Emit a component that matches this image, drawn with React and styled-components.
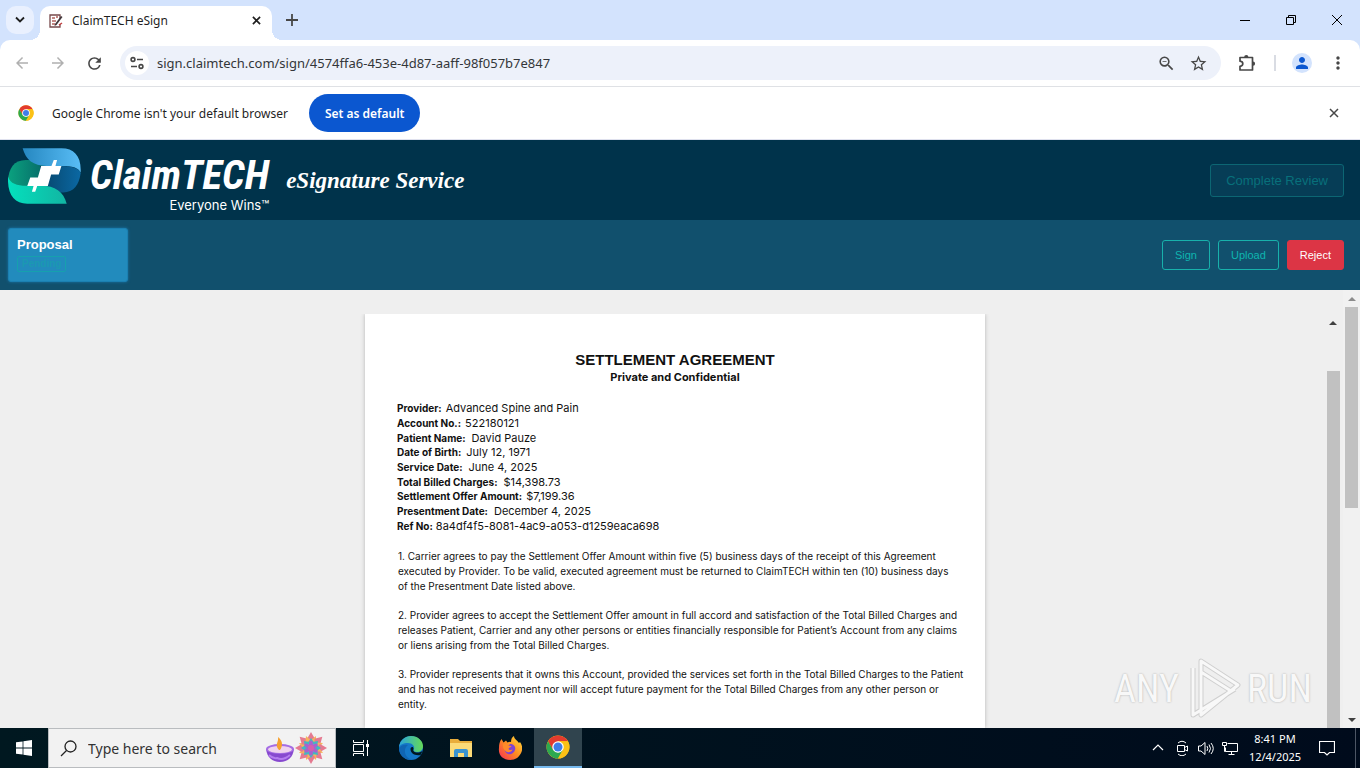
import React from 'react';
import styled, { createGlobalStyle } from 'styled-components';
import { MdArrowBack, MdArrowForward, MdRefresh, MdStarOutline, MdZoomOut, MdPerson, MdMoreVert } from 'react-icons/md';

const GlobalStyle = createGlobalStyle`
    * {
        box-sizing: border-box;
    }
    body {
        margin: 0;
        font-family: 'Liberation Sans', Arial, sans-serif;
    }
    button, input {
        font-family: inherit;
        margin: 0;
    }
    svg {
        display: block;
        flex: none;
    }
`;

const uiFont = `'Noto Sans', 'Open Sans', sans-serif`;

const Screen = styled.div`
    display: flex;
    flex-direction: column;
    height: 100vh;
    overflow: hidden;
    background: #efefef;
`;

/* browser chrome */

const TabStrip = styled.div`
    display: flex;
    align-items: flex-end;
    height: 40px;
    padding-left: 6px;
    background: #d3e3fd;
    font-family: ${uiFont};
`;

const PlainButton = styled.button`
    display: flex;
    align-items: center;
    justify-content: center;
    flex: none;
    width: ${props => props.$w || 32}px;
    height: ${props => props.$h || 32}px;
    padding: 0;
    border: none;
    border-radius: ${props => props.$radius || 0};
    background: ${props => props.$bg || 'transparent'};
    color: ${props => props.$color || '#474747'};
`;

const TabSearch = styled(PlainButton)`
    align-self: center;
    margin-right: 6px;
`;

const Tab = styled.div`
    position: relative;
    display: flex;
    align-items: center;
    width: 232px;
    height: 34px;
    padding: 0 8px 5px;
    border-radius: 10px 10px 0 0;
    background: #fff;
    font-size: 12px;
    color: #1f1f1f;

    &::before,
    &::after {
        content: '';
        position: absolute;
        bottom: 0;
        width: 10px;
        height: 10px;
    }
    &::before {
        right: 100%;
        background: radial-gradient(circle at 0 0, transparent 10px, #fff 10px);
    }
    &::after {
        left: 100%;
        background: radial-gradient(circle at 100% 0, transparent 10px, #fff 10px);
    }
`;

const TabTitle = styled.span`
    flex: 1;
    margin-left: 8px;
`;

const WindowButtons = styled.div`
    display: flex;
    align-self: flex-start;
    margin-left: auto;
`;

const ToolbarBack = styled.div`
    background: #d3e3fd;
`;

const Toolbar = styled.div`
    display: flex;
    align-items: center;
    height: 47px;
    padding: 0 2px 0 6px;
    border-bottom: 1px solid #dfe1e5;
    border-radius: 10px 10px 0 0;
    background: #fff;
    font-family: ${uiFont};
`;

const NavButtons = styled.div`
    display: flex;
    gap: 4px;
    margin-right: 10px;
`;

const AddressBar = styled.div`
    display: flex;
    align-items: center;
    flex: 1;
    height: 34px;
    padding: 0 7px 0 5px;
    border-radius: 17px;
    background: #edf1fa;
`;

const UrlInput = styled.input`
    flex: 1;
    margin-left: 8px;
    padding: 0;
    border: none;
    outline: none;
    background: transparent;
    font-size: 13px;
    color: #333639;
`;

const ToolbarDivider = styled.span`
    width: 2px;
    height: 16px;
    margin: 0 10px 0 1px;
    background: #d9dce3;
`;

const InfoBar = styled.div`
    display: flex;
    align-items: center;
    height: 53px;
    padding: 0 10px 0 18px;
    border-bottom: 1px solid #dfe1ee;
    background: #fff;
    font-family: ${uiFont};
    font-size: 12px;
    color: #1f1f1f;
`;

const InfoText = styled.span`
    flex: none;
    margin: 0 21px 0 18px;
`;

const DefaultButton = styled.button`
    height: 38px;
    padding: 0 16px;
    border: none;
    border-radius: 19px;
    background: #0b57d0;
    font-size: 12px;
    font-weight: 600;
    color: #fff;
    margin-right: auto;
`;

/* page header */

const Header = styled.header`
    display: flex;
    align-items: center;
    justify-content: space-between;
    height: 80px;
    padding: 0 16px 0 8px;
    background: #00334b;
`;

const Brand = styled.a`
    display: flex;
    align-items: center;
    gap: 9px;
    color: #fff;
    text-decoration: none;
`;

const BrandMark = styled.svg`
    align-self: flex-start;
`;

const Wordmark = styled.span`
    display: flex;
    flex-direction: column;
    align-items: flex-end;
    padding-top: 4px;
`;

const BrandName = styled.span`
    font-family: 'Roboto Condensed', 'Open Sans Condensed', Roboto, sans-serif;
    font-size: 41px;
    font-weight: bold;
    font-style: italic;
    line-height: 46px;
`;

const Tagline = styled.span`
    font-family: Inter, sans-serif;
    font-size: 13px;
    line-height: 14px;
`;

const ServiceName = styled.span`
    margin-left: 8px;
    padding-top: 2px;
    font-family: 'Brush Script MT', 'Liberation Serif', cursive;
    font-size: 23px;
    font-style: italic;
    font-weight: bold;
`;

const ActionButton = styled.button`
    height: ${props => props.$large ? 33 : 30}px;
    padding: 0 ${props => props.$large ? 15 : 12}px;
    border: 1px solid ${props => props.$danger ? '#dc3545' : '#18b1ab'};
    border-radius: 3px;
    background: ${props => props.$danger ? '#dc3545' : 'transparent'};
    font-size: ${props => props.$large ? 13 : 11}px;
    color: ${props => props.$danger ? '#fff' : '#0fb5b0'};

    &:disabled {
        border-color: #0c6673;
        background: #063d56;
        color: #08707b;
    }
`;

const DocumentBar = styled.nav`
    display: flex;
    align-items: center;
    justify-content: space-between;
    height: 70px;
    padding: 0 16px 0 8px;
    background: #11506d;
`;

const DocumentTab = styled.button`
    display: flex;
    flex-direction: column;
    align-items: flex-start;
    width: 120px;
    height: 54px;
    padding: 8px;
    border: 1px solid #1b80b2;
    border-radius: 3px;
    background: #228bbd;
    box-shadow: 0 0 3px #1a78ab;
    color: #fff;
    font-size: 13px;
    font-weight: bold;
    line-height: 16px;
`;

const StatusBadge = styled.span`
    margin-top: 3px;
    padding: 0 4px;
    border: 1px solid #16a0ae;
    border-radius: 2px;
    font-size: 10px;
    line-height: 14px;
    color: #1b99b2;
`;

const Actions = styled.div`
    display: flex;
    gap: 8px;
`;

/* document viewer */

const Workspace = styled.main`
    position: relative;
    display: flex;
    flex: 1;
    min-height: 0;
`;

const Viewer = styled.section`
    display: flex;
    flex: 1;
    padding: 24px 2px 0 25px;
    overflow: hidden;
`;

const PageArea = styled.div`
    display: flex;
    justify-content: center;
    flex: 1;
`;

const Page = styled.article`
    width: 620px;
    padding: 37px 32px 0;
    background: #fff;
    box-shadow: 0 0 4px #b5b5b5;
    color: #111;
    clip-path: inset(0 -6px);
    font-family: Inter, 'Liberation Sans', sans-serif;
`;

const PageTitle = styled.h1`
    margin: 0;
    font-family: 'Liberation Sans', sans-serif;
    font-size: 15px;
    line-height: 18px;
    text-align: center;
`;

const PageSubtitle = styled.h2`
    margin: 0 0 16px;
    font-size: 11px;
    line-height: 16px;
    text-align: center;
`;

const Terms = styled.dl`
    display: flex;
    flex-direction: column;
    height: 132px;
    margin: 0 0 16px;
`;

const Term = styled.div`
    display: flex;
    flex: 1;
    align-items: center;
    gap: ${props => props.$gap || 4}px;

    dt {
        font-size: 10px;
        font-weight: bold;
    }
    dd {
        margin: 0;
        font-size: 11px;
    }
`;

const Clause = styled.p`
    margin: 0 0 14px 1px;
    font-size: 10px;
    line-height: 15px;
    white-space: nowrap;
`;

const ScrollTrack = styled.div`
    display: flex;
    flex-direction: column;
    align-items: center;
    flex: none;
    width: ${props => props.$outer ? 17 : 16}px;
    background: ${props => props.$outer ? '#f1f1f1' : 'transparent'};
`;

const ScrollArrow = styled.span`
    width: 17px;
    height: 17px;
    display: flex;
    align-items: center;
    justify-content: center;
    color: ${props => props.$dim ? '#8b8b8b' : '#404040'};
`;

const ScrollThumb = styled.span`
    width: 13px;
    height: ${props => props.$height || 'auto'};
    flex: ${props => props.$height ? 'none' : 1};
    margin-top: ${props => props.$offset || 0}px;
    margin-bottom: ${props => props.$height ? 'auto' : 0};
    background: #c1c1c1;
`;

const Watermark = styled.div`
    position: absolute;
    right: 48px;
    bottom: 8px;
    display: flex;
    align-items: center;
    gap: 6px;
    font-family: 'Roboto Condensed', 'Open Sans Condensed', Roboto, sans-serif;
    font-size: 38px;
    color: #f8f8f8;
    text-shadow: 0 0 2px #a8a8a8;
`;

/* taskbar */

const Taskbar = styled.footer`
    display: flex;
    height: 40px;
    background: linear-gradient(90deg, #001820, #000b1c);
    color: #fff;
    font-family: ${uiFont};
`;

const SearchBox = styled.label`
    display: flex;
    align-items: center;
    width: 288px;
    padding: 0 8px 0 11px;
    border: 1px solid #b9bcbf;
    background: #f2f2f2;
`;

const SearchInput = styled.input`
    flex: 1;
    min-width: 0;
    margin-left: 11px;
    padding: 0;
    border: none;
    outline: none;
    background: transparent;
    font-size: 14px;

    &::placeholder {
        color: #333;
        opacity: 1;
    }
`;

const TaskButton = styled(PlainButton)`
    width: ${props => props.$w || 49}px;
    height: 40px;
    background: ${props => props.$active ? '#30444e' : 'transparent'};
    border-bottom: ${props => props.$active ? '2px solid #76b9ed' : 'none'};
    color: #fff;
`;

const Tray = styled.div`
    display: flex;
    align-items: center;
    margin-left: auto;
`;

const Clock = styled.time`
    width: 66px;
    font-size: 11px;
    line-height: 18px;
    text-align: center;
`;

const PeekEdge = styled.span`
    width: 5px;
    height: 40px;
    margin-left: 9px;
    border-left: 1px solid #4d5665;
`;

const Line = ({ d, size = 16, width = 1, box = 16 }) => (
    <svg width={size} height={size} viewBox={`0 0 ${box} ${box}`} fill="none" stroke="currentColor" strokeWidth={width}>
        <path d={d} />
    </svg>
);

const CloseIcon = ({ size = 10, width = 1.8 }) => <Line d="M1 1l8 8M9 1l-8 8" size={size} box={10} width={width} />;

const ChromeIcon = ({ size }) => (
    <svg width={size} height={size} viewBox="0 0 48 48">
        <circle cx="24" cy="24" r="23" fill="#fbc116" />
        <path d="M4.1 12.5A23 23 0 0 1 43.9 12.5H24L14 30z" fill="#e33b2e" />
        <path d="M4.1 12.5A23 23 0 0 0 24 47L34 29.7 24 35 14 29.7z" fill="#2da94f" />
        <path d="M24 12.5h19.9A23 23 0 0 1 24 47l10-17.3z" fill="#fbc116" />
        <circle cx="24" cy="24" r="11.5" fill="#fff" />
        <circle cx="24" cy="24" r="9" fill="#3f7ee8" />
    </svg>
);

const SignFavicon = () => (
    <svg width="16" height="16" viewBox="0 0 16 16" fill="none">
        <path d="M12 6V2H2v12h10v-3" stroke="#77494b" strokeWidth="1.3" />
        <path d="M4 5h3M4 8h4M4 11h3M8 4h2" stroke="#b1605c" strokeWidth="1.3" />
        <path d="M7 11l6-8 1.5 1-6 8-2 1z" fill="#40363a" />
        <path d="M11 12l3-2" stroke="#c33f40" strokeWidth="1.5" />
    </svg>
);

const SiteInfoIcon = () => (
    <svg width="16" height="16" viewBox="0 0 16 16" fill="none" stroke="#474747" strokeWidth="1.6">
        <circle cx="4" cy="4.5" r="1.9" />
        <path d="M8 4.5h6M2 11.5h6" />
        <circle cx="12" cy="11.5" r="1.9" />
    </svg>
);

const ExtensionIcon = () => (
    <svg width="18" height="18" viewBox="0 0 18 18">
        <path
            d="M2 3.500h12.500v12.500H2v-3.700q2.800-.4 2.800-2.550T2 7.200z"
            fill="none"
            stroke="currentColor"
            strokeWidth="1.7"
            strokeLinejoin="round"
        />
        <path d="M6.200 3a2.100 2.100 0 0 1 4.200 0zM15 7.600a2.100 2.100 0 0 1 0 4.200z" fill="currentColor" />
    </svg>
);

const BrandIcon = () => (
    <BrandMark width="73" height="56" viewBox="24 26 220 169">
        <defs>
            <linearGradient id="sky" x1="0" x2="1" y1="0" y2="0">
                <stop offset="0" stopColor="#2587c0" />
                <stop offset="1" stopColor="#59bdf6" />
            </linearGradient>
            <linearGradient id="navy" x1="0" x2="1" y1="0" y2="0">
                <stop offset="0" stopColor="#064469" />
                <stop offset="1" stopColor="#0b68a3" />
            </linearGradient>
            <linearGradient id="pine" x1="0" x2="1" y1="0" y2="0">
                <stop offset="0" stopColor="#0ba27f" />
                <stop offset="1" stopColor="#056265" />
            </linearGradient>
            <linearGradient id="mint" x1="0" x2="1" y1="0" y2="0">
                <stop offset="0" stopColor="#04e0bd" />
                <stop offset="1" stopColor="#12b5a2" />
            </linearGradient>
        </defs>
        <path d="M105 62H78C42 62 25 88 24 125C35 140 60 142 90 142H150V80z" fill="url(#pine)" />
        <path d="M120 80H190C225 80 242 92 243 102C238 138 222 159 190 160H135z" fill="url(#navy)" />
        <path d="M68 27H185C224 27 246 52 243 100C236 84 216 80 190 80H140C100 80 78 62 68 27z" fill="url(#sky)" />
        <path d="M24 112C30 134 52 140 78 140H125C165 140 192 158 201 194H82C42 194 21 165 24 112z" fill="url(#mint)" />
        <path d="M155 80L162 62H172L167 80H185L177 106H154L144 141H112L106 158H96L101 141H82L91 115H114L124 80z" fill="#fff" />
    </BrandMark>
);

const WatermarkIcon = () => (
    <svg width="56" height="62" viewBox="0 0 56 62" fill="none" strokeLinejoin="round">
        <path d="M16 3L53 27L16 57zM8 10V57L50 31M16 14l30 19" stroke="#cfcfcf" strokeWidth="5" />
        <path d="M16 3L53 27L16 57zM8 10V57L50 31M16 14l30 19" stroke="#f8f8f8" strokeWidth="3" />
    </svg>
);

const LampIcon = () => (
    <svg width="30" height="30" viewBox="0 0 30 30">
        <path d="M1 16C2 24 7 29 15 29S28 24 29 16z" fill="#8749cf" />
        <ellipse cx="15" cy="16" rx="14" ry="5" fill="#a56de4" />
        <ellipse cx="15" cy="16.5" rx="12" ry="3.500" fill="#efd3ee" />
        <path d="M14 17C9 12 14 9 13 4C18 8 18 13 15 17z" fill="#f5a02f" />
        <path d="M4 22q4 4 8 3q6 3 13-3" fill="none" stroke="#b47cf0" strokeWidth="2" />
    </svg>
);

const MandalaIcon = () => (
    <svg width="32" height="32" viewBox="-16 -16 32 32">
        {[0, 45, 90, 135, 180, 225, 270, 315].map(a => (
            <g key={a} transform={`rotate(${a})`}>
                <path d="M0-16L4-9L0-5L-4-9z" fill="#e57a90" />
                <path d="M0-13L4-5H-4z" fill="#f6b35b" transform="rotate(22)" />
            </g>
        ))}
        {[0, 45, 90, 135, 180, 225, 270, 315].map(a => (
            <path key={a} d="M0-10L4-4H-4z" fill="#41b9c1" transform={`rotate(${a})`} />
        ))}
        {[0, 60, 120, 180, 240, 300].map(a => (
            <ellipse key={a} cy="-4" rx="2" ry="3.500" fill="#a763cd" transform={`rotate(${a})`} />
        ))}
        <circle r="3" fill="#d95cab" />
    </svg>
);

const EdgeIcon = () => (
    <svg width="24" height="24" viewBox="0 0 24 24">
        <defs>
            <linearGradient id="edgeTop" x1="0" x2="1" y1="0" y2="0">
                <stop offset="0" stopColor="#2aa5dc" />
                <stop offset="1" stopColor="#65d957" />
            </linearGradient>
        </defs>
        <circle cx="12" cy="12" r="12" fill="#1478c9" />
        <path d="M0 11C1 4 6 0 12 0c7 0 12 5 12 10 0 4-3 6-6 6s-4-1-3-3c1-3-2-6-6-6-5 0-8 2-9 4z" fill="url(#edgeTop)" />
        <path d="M14.500 13c-1 2 1 3.500 4 3.500 2 0 4-.5 5-2-.5 2-1 3-2 4.500-6 1-10-2-10-6 0-2 3-3 3 0z" fill="#001820" />
        <path d="M9 9c-6 4-3 15 6 15-8 1-15-4-15-12 2-3 6-4 9-3z" fill="#1065b3" />
    </svg>
);

const FolderIcon = () => (
    <svg width="22" height="20" viewBox="0 0 22 20">
        <path d="M0 1h8l2 2h12v16H0z" fill="#e9ad3c" />
        <path d="M0 5h22v14H0z" fill="#fcda78" />
        <path d="M4 19v-6q0-2 2-2h10q2 0 2 2v6h-4v-4H8v4z" fill="#3b93d1" />
    </svg>
);

const FirefoxIcon = () => (
    <svg width="24" height="24" viewBox="0 0 24 24">
        <defs>
            <linearGradient id="fox" x1="1" x2="0" y1="0" y2="1">
                <stop offset="0" stopColor="#ffe13c" />
                <stop offset=".5" stopColor="#ff8b22" />
                <stop offset="1" stopColor="#f32a58" />
            </linearGradient>
        </defs>
        <path d="M3.500 3l2 3.500 2.500-2 1.500 2q2-1 3.500-.5c0-3 1-5 3-6 0 3 3 4 5 7l1-1c2 3 3 6 1.500 10-2 5-6 8-11.500 8C5 24 0 19 1 12c0-4 .5-6 2.500-9z" fill="url(#fox)" />
        <path d="M7 10c3 1 3 0 5-2 4 0 6 3 5 6s-4 5-7 4-4-4-3-8z" fill="#7f42d2" />
        <path d="M5 8c2-1 4 0 5 1.500l3.500.5c-.5 1.500-3 1.500-3 3 1 1.500 3 1 4 .5-1 3-5 3.500-7 1.500C5 13 4.500 10 5 8z" fill="#ff8a2a" />
    </svg>
);

const Triangle = ({ down }) => (
    <svg width="8" height="4" viewBox="0 0 8 4">
        <path d={down ? 'M0 0h8L4 4z' : 'M0 4h8L4 0z'} fill="currentColor" />
    </svg>
);

const terms = [
    ['Provider:', 'Advanced Spine and Pain', 4],
    ['Account No.:', '522180121', 4],
    ['Patient Name:', 'David Pauze', 6],
    ['Date of Birth:', 'July 12, 1971', 5],
    ['Service Date:', 'June 4, 2025', 6],
    ['Total Billed Charges:', '$14,398.73', 6],
    ['Settlement Offer Amount:', '$7,199.36', 4],
    ['Presentment Date:', 'December 4, 2025', 6],
    ['Ref No:', '8a4df4f5-8081-4ac9-a053-d1259eaca698', 3],
];

const clauses = [
    [
        '1. Carrier agrees to pay the Settlement Offer Amount within five (5) business days of the receipt of this Agreement',
        'executed by Provider. To be valid, executed agreement must be returned to ClaimTECH within ten (10) business days',
        'of the Presentment Date listed above.',
    ],
    [
        '2. Provider agrees to accept the Settlement Offer amount in full accord and satisfaction of the Total Billed Charges and',
        'releases Patient, Carrier and any other persons or entities financially responsible for Patient’s Account from any claims',
        'or liens arising from the Total Billed Charges.',
    ],
    [
        '3. Provider represents that it owns this Account, provided the services set forth in the Total Billed Charges to the Patient',
        'and has not received payment nor will accept future payment for the Total Billed Charges from any other person or',
        'entity.',
    ],
];

function BrowserChrome() {
    return (
        <>
            <TabStrip>
                <TabSearch $w={28} $h={28} $radius="10px" $bg="#e9f0fe" $color="#1f1f1f" aria-label="Search tabs">
                    <Line d="M1 2.5l4 4 4-4" size={10} box={10} width={1.8} />
                </TabSearch>
                <Tab>
                    <SignFavicon />
                    <TabTitle>ClaimTECH eSign</TabTitle>
                    <PlainButton $w={16} $h={28} $color="#1f1f1f" aria-label="Close tab"><CloseIcon size={9} /></PlainButton>
                </Tab>
                <PlainButton $w={40} $h={40} aria-label="New tab">
                    <Line d="M6 0v12M0 6h12" size={12} box={12} width={1.8} />
                </PlainButton>
                <WindowButtons>
                    <PlainButton $w={46} $h={40} $color="#000" aria-label="Minimize"><Line d="M0 5.5h10" size={10} box={10} /></PlainButton>
                    <PlainButton $w={46} $h={40} $color="#000" aria-label="Restore"><Line d="M.5 2.5h7v7h-7zM2.5 2.5v-2h7v7h-2" size={10} box={10} /></PlainButton>
                    <PlainButton $w={46} $h={40} $color="#000" aria-label="Close"><Line d="M0 0l10 10M10 0L0 10" size={10} box={10} /></PlainButton>
                </WindowButtons>
            </TabStrip>
            <ToolbarBack>
                <Toolbar>
                    <NavButtons>
                        <PlainButton $color="#b0b0b0" aria-label="Back"><MdArrowBack size={18} /></PlainButton>
                        <PlainButton $color="#b0b0b0" aria-label="Forward"><MdArrowForward size={18} /></PlainButton>
                        <PlainButton aria-label="Reload"><MdRefresh size={19} /></PlainButton>
                    </NavButtons>
                    <AddressBar>
                        <PlainButton $w={24} $h={24} $radius="50%" $bg="#fff" aria-label="Site information"><SiteInfoIcon /></PlainButton>
                        <UrlInput aria-label="Address" defaultValue="sign.claimtech.com/sign/4574ffa6-453e-4d87-aaff-98f057b7e847" />
                        <PlainButton aria-label="Zoom"><MdZoomOut size={19} /></PlainButton>
                        <PlainButton aria-label="Bookmark"><MdStarOutline size={19} /></PlainButton>
                    </AddressBar>
                    <PlainButton $w={52} aria-label="Extensions"><ExtensionIcon /></PlainButton>
                    <ToolbarDivider />
                    <PlainButton aria-label="Profile">
                        <PlainButton as="span" $w={20} $h={20} $radius="50%" $bg="#d3e3fd" $color="#0b57d0"><MdPerson size={18} /></PlainButton>
                    </PlainButton>
                    <PlainButton $w={40} aria-label="Menu"><MdMoreVert size={20} /></PlainButton>
                </Toolbar>
            </ToolbarBack>
            <InfoBar>
                <ChromeIcon size={16} />
                <InfoText>Google Chrome isn't your default browser</InfoText>
                <DefaultButton>Set as default</DefaultButton>
                <PlainButton aria-label="Dismiss"><CloseIcon width={1.5} /></PlainButton>
            </InfoBar>
        </>
    );
}

function AgreementPage() {
    return (
        <Page>
            <PageTitle>SETTLEMENT AGREEMENT</PageTitle>
            <PageSubtitle>Private and Confidential</PageSubtitle>
            <Terms>
                {terms.map(([label, value, gap]) => (
                    <Term key={label} $gap={gap}>
                        <dt>{label}</dt>
                        <dd>{value}</dd>
                    </Term>
                ))}
            </Terms>
            {clauses.map(lines => (
                <Clause key={lines[0]}>
                    {lines.map(line => (
                        <React.Fragment key={line}>{line}<br /></React.Fragment>
                    ))}
                </Clause>
            ))}
        </Page>
    );
}

function WindowsTaskbar() {
    return (
        <Taskbar>
            <TaskButton $w={48} aria-label="Start">
                <svg width="16" height="16" viewBox="0 0 16 16" fill="#fff">
                    <path d="M0 2.3l6.6-.9v6.2H0zM7.4 1.3L16 0v7.6H7.4zM0 8.4h6.6v6.2L0 13.7zM7.4 8.4H16V16l-8.6-1.2z" />
                </svg>
            </TaskButton>
            <SearchBox>
                <svg width="17" height="17" viewBox="0 0 17 17" fill="none" stroke="#222" strokeWidth="1.3">
                    <circle cx="10.5" cy="6.5" r="5.5" />
                    <path d="M6.5 10.5L1 16" />
                </svg>
                <SearchInput aria-label="Search" placeholder="Type here to search" />
                <LampIcon />
                <MandalaIcon />
            </SearchBox>
            <TaskButton aria-label="Task view">
                <svg width="18" height="18" viewBox="0 0 18 18" fill="none" stroke="#fff">
                    <path d="M1.500 1v2.500h10V1M1.500 5.500h10v7h-10zM1.500 17v-2.500h10V17M15.500 1v16" />
                    <path d="M14 5h3v3h-3z" fill="#fff" stroke="none" />
                </svg>
            </TaskButton>
            <TaskButton $w={51} aria-label="Edge"><EdgeIcon /></TaskButton>
            <TaskButton aria-label="File Explorer"><FolderIcon /></TaskButton>
            <TaskButton aria-label="Firefox"><FirefoxIcon /></TaskButton>
            <TaskButton $w={48} $active aria-label="Chrome"><ChromeIcon size={24} /></TaskButton>
            <Tray>
                <TaskButton $w={24} aria-label="Show hidden icons"><Line d="M1 8l5-5 5 5" size={12} box={12} width={1.2} /></TaskButton>
                <TaskButton $w={24} aria-label="Meet now">
                    <Line d="M3.500 5.500h7v6h-7zM10.500 7.500l3-1.500v5l-3-1.500M4 3q4-3.500 8 0M4 14q4 3.500 8 0" />
                </TaskButton>
                <TaskButton $w={24} aria-label="Volume">
                    <Line d="M.5 6v5H3l4 3.500v-12L3 6zM9 6q1.500 2.500 0 5M11 4.500q3 4 0 8M13 3q4.500 5.500 0 11" />
                </TaskButton>
                <TaskButton $w={24} aria-label="Network">
                    <Line d="M5.500 3.500h10v8H3.500v-4M9.500 11.500v3M6.500 14.500h6M.5 2.500h4v3h-4zM2.500 5.500v6h1" />
                </TaskButton>
                <Clock>8:41 PM<br />12/4/2025</Clock>
                <TaskButton $w={38} aria-label="Notifications">
                    <Line d="M.5 1.500h15v11h-5l-2.500 2.500-2.500-2.500h-5z" width={1.2} />
                </TaskButton>
                <PeekEdge />
            </Tray>
        </Taskbar>
    );
}

function App() {
    return (
        <Screen>
            <GlobalStyle />
            <BrowserChrome />
            <Header>
                <Brand href="#">
                    <BrandIcon />
                    <Wordmark>
                        <BrandName>ClaimTECH</BrandName>
                        <Tagline>Everyone Wins™</Tagline>
                    </Wordmark>
                    <ServiceName>eSignature Service</ServiceName>
                </Brand>
                <ActionButton $large disabled>Complete Review</ActionButton>
            </Header>
            <DocumentBar>
                <DocumentTab>
                    Proposal
                    <StatusBadge>Pending</StatusBadge>
                </DocumentTab>
                <Actions>
                    <ActionButton>Sign</ActionButton>
                    <ActionButton>Upload</ActionButton>
                    <ActionButton $danger>Reject</ActionButton>
                </Actions>
            </DocumentBar>
            <Workspace>
                <Viewer>
                    <PageArea>
                        <AgreementPage />
                    </PageArea>
                    <ScrollTrack>
                        <ScrollArrow><Triangle /></ScrollArrow>
                        <ScrollThumb $offset={40} />
                    </ScrollTrack>
                </Viewer>
                <ScrollTrack $outer>
                    <ScrollArrow $dim><Triangle /></ScrollArrow>
                    <ScrollThumb $height="201px" />
                    <ScrollArrow><Triangle down /></ScrollArrow>
                </ScrollTrack>
                <Watermark>
                    <span>ANY</span>
                    <WatermarkIcon />
                    <span>RUN</span>
                </Watermark>
            </Workspace>
            <WindowsTaskbar />
        </Screen>
    );
}

export default App;
